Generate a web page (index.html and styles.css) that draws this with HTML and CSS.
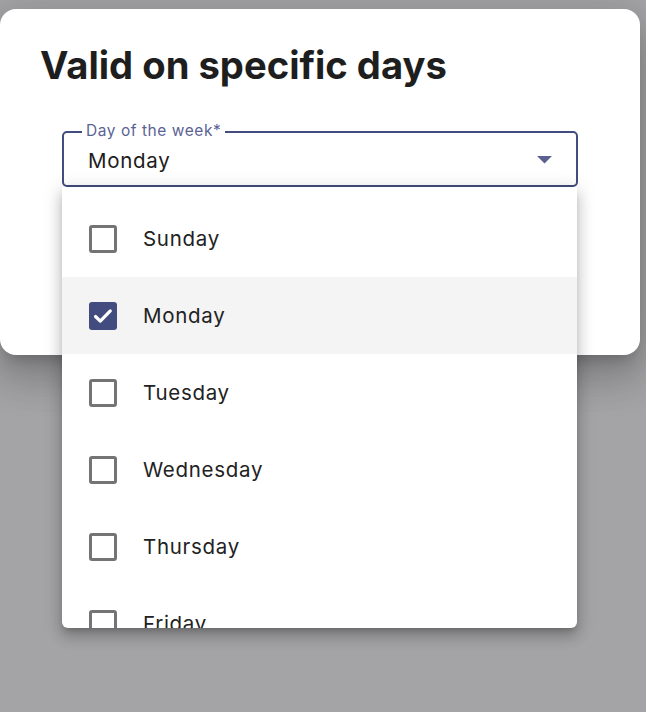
FILE: index.html
```html
<!DOCTYPE html>
<html lang="en">
<head>
<meta charset="utf-8">
<title>Valid on specific days</title>
<link rel="stylesheet" href="styles.css">
</head>
<body>
<div class="dialog">
  <h2 class="title">Valid on specific days</h2>
  <div class="field">
    <span class="field-label">Day of the week*</span>
    <div class="field-box">
      <span class="field-value">Monday</span>
      <svg class="arrow" width="15" height="8" viewBox="0 0 15 8"><path d="M0 0h15L7.5 7.5z" fill="#5a6190"/></svg>
    </div>
    <ul class="menu">
      <li class="item"><span class="cb"></span><span class="item-text">Sunday</span></li>
      <li class="item selected"><span class="cb checked"><svg width="28" height="28" viewBox="0 0 28 28"><path d="M6.5 14.5l4.8 4.6 10-10.2" fill="none" stroke="#fff" stroke-width="3.2" stroke-linecap="round" stroke-linejoin="round"/></svg></span><span class="item-text">Monday</span></li>
      <li class="item"><span class="cb"></span><span class="item-text">Tuesday</span></li>
      <li class="item"><span class="cb"></span><span class="item-text">Wednesday</span></li>
      <li class="item"><span class="cb"></span><span class="item-text">Thursday</span></li>
      <li class="item"><span class="cb"></span><span class="item-text">Friday</span></li>
    </ul>
  </div>
</div>
</body>
</html>
```

FILE: styles.css
```css
* { box-sizing: border-box; }
html, body { margin: 0; padding: 0; }
body {
  width: 646px;
  height: 712px;
  overflow: hidden;
  background: #a4a4a6;
  font-family: "Inter", "Roboto", sans-serif;
  color: #1f1f1f;
  padding-top: 9px;
}
.dialog {
  width: 640px;
  height: 346px;
  background: #fff;
  border-radius: 16px;
  padding: 35px 0 0 40px;
  box-shadow: 0 11px 15px -7px rgba(0,0,0,0.2), 0 24px 38px 3px rgba(0,0,0,0.14), 0 9px 46px 8px rgba(0,0,0,0.12);
}
.title {
  margin: 0;
  font-size: 38.2px;
  line-height: 42px;
  font-weight: 700;
  color: #1e1e1e;
}
.field {
  position: relative;
  margin: 45px 0 0 22px;
  width: 516px;
}
.field-box {
  height: 56px;
  border: 2px solid #434c7e;
  border-radius: 5px;
  display: flex;
  align-items: center;
  padding: 0 24px 0 24px;
  justify-content: space-between;
}
.field-value {
  font-size: 20.5px;
  letter-spacing: 0.7px;
  color: #1c1c1c;
  padding-top: 3px;
}
.arrow { margin-top: 2px; }
.field-label {
  position: absolute;
  left: 20px;
  top: -9px;
  padding: 0 4px;
  background: #fff;
  font-size: 15.5px;
  letter-spacing: 0.55px;
  line-height: 18px;
  color: #5b6394;
}
.menu {
  position: absolute;
  left: 0;
  top: 56px;
  width: 515px;
  height: 441px;
  margin: 0;
  padding: 13px 0 0;
  list-style: none;
  background: #fff;
  border-radius: 0 0 6px 6px;
  overflow: hidden;
  box-shadow: 0 5px 6px -3px rgba(0,0,0,0.2), 0 9px 13px 1px rgba(0,0,0,0.14), 0 3px 18px 3px rgba(0,0,0,0.12);
}
.item {
  height: 77px;
  display: flex;
  align-items: center;
  padding-left: 27px;
}
.item.selected { background: #f4f4f4; }
.cb {
  width: 28px;
  height: 28px;
  border: 3px solid #747474;
  border-radius: 3px;
  flex: none;
}
.cb.checked {
  background: #434c7e;
  border: none;
}
.cb svg { display: block; }
.item-text {
  margin-left: 26px;
  font-size: 20.5px;
  letter-spacing: 0.7px;
  color: #222;
}
```
